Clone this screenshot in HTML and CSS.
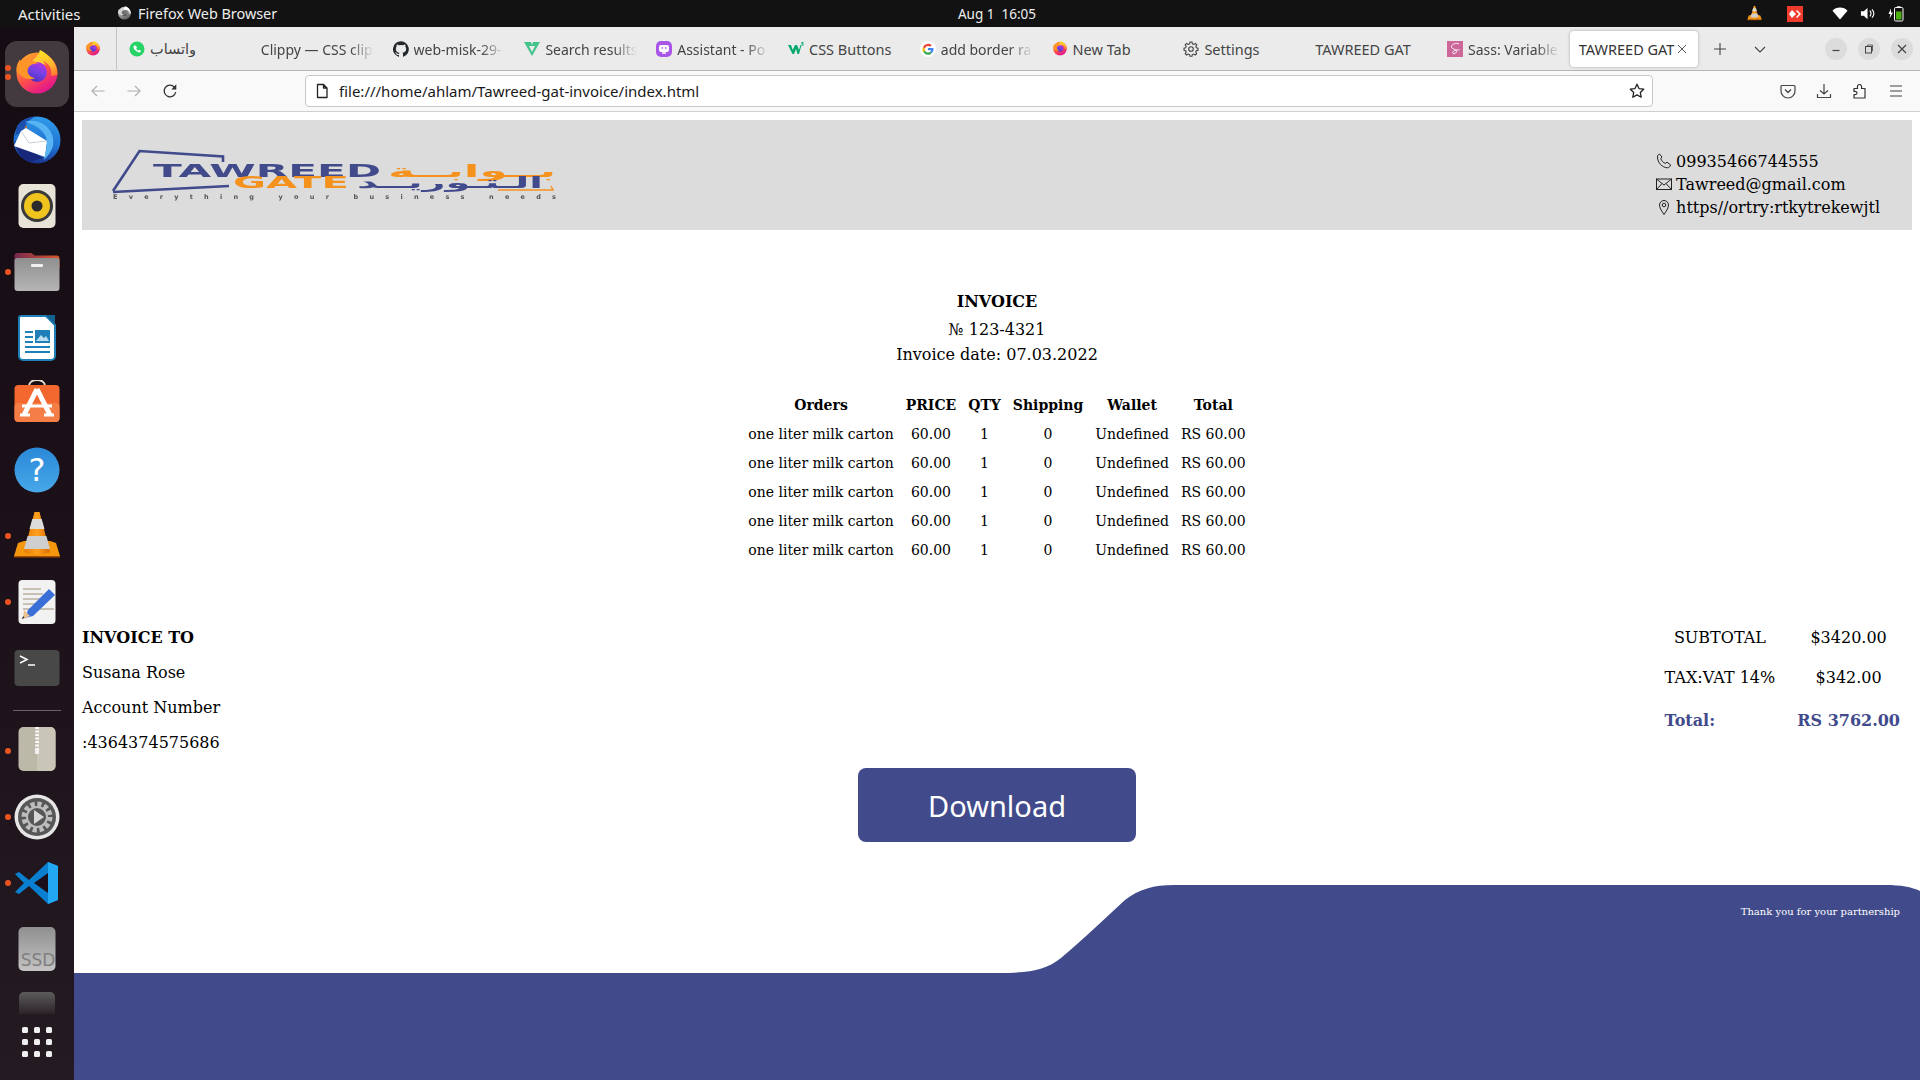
FILE: index.html
```html
<!DOCTYPE html>
<html lang="en">
<head>
<meta charset="utf-8">
<title>TAWREED GAT</title>
<link rel="stylesheet" href="styles.css">
</head>
<body>
<svg class="defs" width="0" height="0" aria-hidden="true">
  <defs>
    <linearGradient id="ffbody" x1="0.1" y1="0.2" x2="0.6" y2="1">
      <stop offset="0" stop-color="#ff9a2e"/><stop offset="0.5" stop-color="#ff4f4a"/><stop offset="1" stop-color="#e3178c"/>
    </linearGradient>
    <linearGradient id="ffflame" x1="0.4" y1="0" x2="0.6" y2="1">
      <stop offset="0" stop-color="#ffe226"/><stop offset="0.6" stop-color="#ffb52e"/><stop offset="1" stop-color="#ff7a2e"/>
    </linearGradient>
    <linearGradient id="ffglobe" x1="0.7" y1="0" x2="0.3" y2="1">
      <stop offset="0" stop-color="#b833e1"/><stop offset="0.5" stop-color="#7542e5"/><stop offset="1" stop-color="#4a2bc0"/>
    </linearGradient>
    <linearGradient id="tbbody" x1="0.6" y1="0" x2="0.4" y2="1">
      <stop offset="0" stop-color="#2f9be8"/><stop offset="0.6" stop-color="#1f6fd0"/><stop offset="1" stop-color="#1a2f8a"/>
    </linearGradient>
    <linearGradient id="filestop" x1="0" y1="0" x2="1" y2="0">
      <stop offset="0" stop-color="#77294f"/><stop offset="1" stop-color="#d9572b"/>
    </linearGradient>
    <linearGradient id="filesbody" x1="0" y1="0" x2="0" y2="1">
      <stop offset="0" stop-color="#8f8f8f"/><stop offset="1" stop-color="#b5b5b5"/>
    </linearGradient>
    <linearGradient id="helpbody" x1="0" y1="0" x2="0" y2="1">
      <stop offset="0" stop-color="#2a88d8"/><stop offset="1" stop-color="#48a8e8"/>
    </linearGradient>
    <linearGradient id="ssdbody" x1="0" y1="0" x2="0" y2="1">
      <stop offset="0" stop-color="#8f8f8f"/><stop offset="1" stop-color="#c4c4c4"/>
    </linearGradient>
    <linearGradient id="vlccone" x1="0" y1="0" x2="1" y2="0">
      <stop offset="0" stop-color="#e87a08"/><stop offset="0.5" stop-color="#ffa01e"/><stop offset="1" stop-color="#d96c05"/>
    </linearGradient>
    <symbol id="i-firefox" viewBox="0 0 48 48">
      <circle cx="24" cy="23" r="20.500" fill="url(#ffbody)"/>
      <path d="M27 0c-1.500 6 1 10 5 12 5 3 7 8 6 14l6.500-1C45 14 37 5 27 0z" fill="url(#ffflame)"/>
      <path d="M27 0c-2 6-5 8-8 11l14 4c-3-4-7-8-6-15z" fill="#ffcf32"/>
      <circle cx="24" cy="22" r="10" fill="url(#ffglobe)"/>
      <path d="M3.500 22C3 16 5 12 7 9.500c.5 1.500 1.500 2.500 3 3 3-2.500 6-4 9-4.500-1 1-1.500 2.500-1.500 4 3-1 6 0 8 1.500-4-.5-10 1.500-11 6-.5 4 2.500 8 8 8.500-5 2.500-11 1-14-2-2.500-2-4-4-5-4.500z" fill="#ff9528"/>
    </symbol>
    <symbol id="i-thunderbird" viewBox="0 0 48 48">
      <circle cx="24" cy="24" r="23.500" fill="url(#tbbody)"/>
      <path d="M4 10C8 4 14 1 22 .5 15 4 12 9 11 14l-9 6z" fill="#1b4fae"/>
      <path d="M2 25c1 11 7 18 14 21l14-4z" fill="#18277a"/>
      <path d="M8 15l5-3 21 13-2 16L1 30z" fill="#fff"/>
      <path d="M8 15l8 12 18-2" fill="none" stroke="#b8c3cc" stroke-width="0.800"/>
      <path d="M12 6c8-3 18 0 23 6s6 12 5 18c-2 6-5 10-9 14 1-5 3-13 3-18C34 16 22 8 12 6z" fill="#57b3f2"/>
      <circle cx="13" cy="11" r="1.100" fill="#d86a20"/>
    </symbol>
    <symbol id="i-rhythmbox" viewBox="0 0 48 48">
      <rect x="5.500" y="2" width="37" height="44" rx="5" fill="#e7e3d7"/>
      <circle cx="24" cy="24" r="16" fill="#3a3a3a"/>
      <circle cx="24" cy="24" r="13" fill="#f0c41f"/>
      <circle cx="24" cy="24" r="5.500" fill="#2b2b2b"/>
    </symbol>
    <symbol id="i-files" viewBox="0 0 48 48">
      <path d="M1.500 8a3 3 0 0 1 3-3h14l3 2.500h22a3 3 0 0 1 3 3V20H1.500z" fill="url(#filestop)"/>
      <rect x="1.500" y="10" width="45" height="33" rx="3" fill="url(#filesbody)"/>
      <rect x="18" y="16" width="12" height="3" rx="1" fill="#f0f0f0"/>
    </symbol>
    <symbol id="i-writer" viewBox="0 0 48 48">
      <path d="M8 2h25l9 9v31a4 4 0 0 1-4 4H10a4 4 0 0 1-4-4V4a2 2 0 0 1 2-2z" fill="#fff" stroke="#1f7fb8" stroke-width="2"/>
      <path d="M33 1h9v10z" fill="#14628f"/>
      <path d="M12 17h8v2h-8zM12 22h8v2h-8zM12 27h8v2h-8zM12 32h25v2H12zM12 37h25v2H12z" fill="#1f7fb8"/>
      <rect x="22" y="16" width="15" height="13" fill="#1f7fb8"/>
      <path d="M23 27l5-6 3 3 2-2 3 5z" fill="#bcdcf0"/>
    </symbol>
    <symbol id="i-software" viewBox="0 0 48 48">
      <path d="M16 6c0-8 16-8 16 0" fill="none" stroke="#e5dccb" stroke-width="2"/>
      <rect x="1.500" y="5" width="45" height="37" rx="4" fill="#f2682f"/>
      <rect x="1.500" y="23" width="45" height="19" rx="4" fill="#f57e47"/>
      <path d="M24 9l-13 26M24 9l13 26" stroke="#fff" stroke-width="5" fill="none"/>
      <path d="M9 26h30" stroke="#fff" stroke-width="3"/>
      <path d="M7 35h10M31 35h10" stroke="#fff" stroke-width="3"/>
    </symbol>
    <symbol id="i-vlc" viewBox="0 0 48 48">
      <path d="M11 29L5 31 1 44h46l-4-13-6-2z" fill="#f5960f"/>
      <path d="M1 44h46v1.500H1z" fill="#a04a05"/>
      <path d="M21 2a3 3 0 0 1 6 0l10 38c-4 3-22 3-26 0z" fill="url(#vlccone)"/>
      <path d="M19.300 7h9.400l2.800 10h-15z" fill="#dcdcdc"/>
      <path d="M14.600 24h18.800L37 37H11z" fill="#cfcfcf"/>
    </symbol>
    <symbol id="i-editor" viewBox="0 0 48 48">
      <rect x="5.500" y="2" width="37" height="44" rx="4" fill="#f2f2f2"/>
      <path d="M10 11h18M10 16h20M10 21h18M10 26h16M10 31h10M27 31h14" stroke="#c6c1b4" stroke-width="2"/>
      <path d="M36 11l6 6-22 21-8 2 3-8z" fill="#3a6fd8"/>
      <path d="M11 32l6 6-7 3z" fill="#e9c08e"/>
      <path d="M10.500 38l-2 3 3-1z" fill="#333"/>
    </symbol>
    <symbol id="i-archive" viewBox="0 0 48 48">
      <rect x="5.500" y="0" width="37" height="44" rx="5" fill="#bdb9a9"/>
      <path d="M24 0h13a5.500 5.500 0 0 1 5.500 5v34a5 5 0 0 1-5 5H24z" fill="#c9c6b8"/>
      <path d="M24 0v22" stroke="#fff" stroke-width="3.500" stroke-dasharray="2 1.500"/>
      <rect x="22" y="21" width="4" height="6" rx="1" fill="#f2f2f2"/>
    </symbol>
    <symbol id="i-settings" viewBox="0 0 48 48">
      <circle cx="24" cy="24" r="22.500" fill="#e6e6e6"/>
      <circle cx="24" cy="24" r="19" fill="#575757"/>
      <circle cx="24" cy="24" r="12.500" fill="none" stroke="#bdbdbd" stroke-width="6" stroke-dasharray="4 2.540"/>
      <circle cx="24" cy="24" r="10" fill="none" stroke="#bdbdbd" stroke-width="2"/>
      <path d="M21 17l10 7-10 7z" fill="#d8d8d8"/>
    </symbol>
    <symbol id="i-vscode" viewBox="0 0 48 48">
      <path d="M35 3L16 21 6 13 2 15l9 9-9 9 4 2 10-8 19 18 10-4V7z" fill="#0a7fd0"/>
      <path d="M35 3l10 4v34l-10 4z" fill="#22a7f2"/>
      <path d="M35 14L21 24l14 10z" fill="#1b0f1a"/>
    </symbol>
    <symbol id="i-ssd" viewBox="0 0 48 48">
      <rect x="5.500" y="2" width="37" height="44" rx="5" fill="url(#ssdbody)"/>
    </symbol>
    <symbol id="i-terminal" viewBox="0 0 48 48">
      <rect x="1.500" y="6" width="45" height="36" rx="4" fill="#484848"/>
      <path d="M7 12l7 3.500-7 3.500" fill="none" stroke="#fff" stroke-width="1.500"/>
      <path d="M15 21h7" stroke="#fff" stroke-width="1.500"/>
    </symbol>
    <symbol id="i-help" viewBox="0 0 48 48">
      <circle cx="24" cy="24" r="22.500" fill="url(#helpbody)"/>
    </symbol>
  </defs>
</svg>

<header class="topbar">
  <span class="top-activities">Activities</span>
  <span class="top-app">
    <svg class="ic-15 muted-icon"><use href="#i-firefox"/></svg>
    Firefox Web Browser
  </span>
  <span class="top-clock">Aug 1&nbsp;&nbsp;16:05</span>
  <span class="top-status">
    <svg class="ic-16 st-vlc"><use href="#i-vlc"/></svg>
    <svg class="st-red" viewBox="0 0 16 16"><rect width="16" height="16" fill="#ee3b2d"/><path d="M5 4l4 4-4 4-3-4zM10 4l4 4-4 4-1-1 3-3-3-3z" fill="#fff"/></svg>
    <svg class="st-wifi" viewBox="0 0 16 16"><path d="M0 5c4-4.500 12-4.500 16 0L8 14.500z" fill="#fff"/></svg>
    <svg class="st-vol" viewBox="0 0 16 16"><path d="M1 5.500h3L8 2v12L4 10.500H1z" fill="#fff"/><path d="M10.500 5c1.500 1.800 1.500 4.200 0 6M12.800 3.500c2.400 2.700 2.400 6.300 0 9" fill="none" stroke="#fff" stroke-width="1.200"/></svg>
    <svg class="st-bat" viewBox="0 0 16 16"><path d="M3 3L0.500 8.500h2L1.500 13 5 7H3z" fill="#fff"/><rect x="6.500" y="2" width="8.500" height="13.500" rx="1.200" fill="none" stroke="#fff"/><rect x="9" y="0.800" width="3.500" height="1.400" fill="#fff"/><rect x="8" y="6" width="5.500" height="8" fill="#4caf10"/></svg>
  </span>
</header>

<div class="desktop">
  <nav class="dock">
    <div class="dock-item dock-item-active">
      <span class="dot dot-a"></span><span class="dot dot-b"></span>
      <svg class="dock-ic"><use href="#i-firefox"/></svg>
    </div>
    <div class="dock-item"><svg class="dock-ic"><use href="#i-thunderbird"/></svg></div>
    <div class="dock-item"><svg class="dock-ic"><use href="#i-rhythmbox"/></svg></div>
    <div class="dock-item"><span class="dot"></span><svg class="dock-ic"><use href="#i-files"/></svg></div>
    <div class="dock-item"><svg class="dock-ic"><use href="#i-writer"/></svg></div>
    <div class="dock-item"><svg class="dock-ic"><use href="#i-software"/></svg></div>
    <div class="dock-item">
      <svg class="dock-ic" viewBox="0 0 48 48"><use href="#i-help"/><text x="24" y="35" class="help-mark">?</text></svg>
    </div>
    <div class="dock-item"><span class="dot"></span><svg class="dock-ic"><use href="#i-vlc"/></svg></div>
    <div class="dock-item"><span class="dot"></span><svg class="dock-ic"><use href="#i-editor"/></svg></div>
    <div class="dock-item"><svg class="dock-ic"><use href="#i-terminal"/></svg></div>
    <div class="dock-sep"></div>
    <div class="dock-item"><span class="dot"></span><svg class="dock-ic"><use href="#i-archive"/></svg></div>
    <div class="dock-item"><span class="dot"></span><svg class="dock-ic"><use href="#i-settings"/></svg></div>
    <div class="dock-item"><span class="dot"></span><svg class="dock-ic"><use href="#i-vscode"/></svg></div>
    <div class="dock-item">
      <svg class="dock-ic" viewBox="0 0 48 48"><use href="#i-ssd"/><text x="25" y="41" class="ssd-mark">SSD</text></svg>
    </div>
    <div class="dock-tile"></div>
    <div class="dock-grid">
      <i></i><i></i><i></i><i></i><i></i><i></i><i></i><i></i><i></i>
    </div>
  </nav>

  <div class="browser">
    <div class="tabbar">
      <div class="tab-home"><svg class="ic-16"><use href="#i-firefox"/></svg></div>
      <div class="tab">
        <svg class="tab-ic" viewBox="0 0 16 16"><circle cx="8" cy="8" r="7.500" fill="#25d366"/><path d="M5 4.500c-1 1-.6 3 1.200 4.800S10.500 12 11.500 11l.5-1.200-2-1-.8.800c-1-.4-1.500-1-2-2l.8-.8-1-2z" fill="#fff"/></svg>
        <span class="tab-label tab-arabic">واتساب</span>
      </div>
      <div class="tab"><span class="tab-label tab-fade">Clippy — CSS clip</span></div>
      <div class="tab">
        <svg class="tab-ic" viewBox="0 0 16 16"><path d="M8 .2a8 8 0 0 0-2.500 15.600c.4.100.5-.2.500-.4v-1.400c-2.200.5-2.700-1-2.700-1-.4-.9-.9-1.200-.9-1.200-.7-.5.100-.5.100-.5.800.1 1.200.8 1.200.8.700 1.200 1.900.9 2.300.7.100-.5.300-.9.500-1.100-1.800-.2-3.600-.9-3.600-4 0-.9.300-1.600.8-2.100-.1-.2-.4-1 .1-2.100 0 0 .7-.2 2.200.8a7.600 7.600 0 0 1 4 0c1.500-1 2.200-.8 2.200-.8.400 1.100.2 1.900.1 2.100.5.600.8 1.300.8 2.100 0 3.100-1.900 3.700-3.700 3.900.3.300.6.800.6 1.500v2.200c0 .2.100.5.600.4A8 8 0 0 0 8 .2z" fill="#24292e"/></svg>
        <span class="tab-label tab-fade">web-misk-29-</span>
      </div>
      <div class="tab">
        <svg class="tab-ic" viewBox="0 0 16 16"><path d="M0 1h7l1 3 1-3h7L8 15z" fill="#42c48a"/><path d="M5 5h6l-3 6z" fill="#ebebeb"/></svg>
        <span class="tab-label tab-fade">Search results</span>
      </div>
      <div class="tab">
        <svg class="tab-ic" viewBox="0 0 16 16"><rect width="16" height="16" rx="5" fill="#a855e8"/><rect x="3" y="4" width="10" height="7" rx="2" fill="#fff"/><path d="M5.500 7h1.500M9 7h1.500" stroke="#a855e8" stroke-width="1.500"/><path d="M6 12h4" stroke="#fff" stroke-width="1.500"/></svg>
        <span class="tab-label tab-fade">Assistant - Po</span>
      </div>
      <div class="tab">
        <svg class="tab-ic" viewBox="0 0 16 16"><path d="M0 4h3l1.800 5L7 4h2l2 5 1.500-5h1L11 13H9.500L8 8l-2 5H4.500z" fill="#04aa6d"/><path d="M13.500 1h2v1l-1 1h1v1.500h-2v-.7h1v-.6h-1z" fill="#04aa6d"/></svg>
        <span class="tab-label">CSS Buttons</span>
      </div>
      <div class="tab">
        <svg class="tab-ic" viewBox="0 0 16 16"><circle cx="8" cy="8" r="8" fill="#fff"/><path d="M13.500 8.200c0-.4 0-.8-.1-1.200H8v2.200h3.100a2.700 2.700 0 0 1-1.200 1.700l1.800 1.400c1.100-1 1.800-2.400 1.800-4.100z" fill="#4285f4"/><path d="M8 13.800c1.500 0 2.800-.5 3.700-1.400l-1.800-1.400c-.5.300-1.200.5-1.900.5-1.500 0-2.700-1-3.100-2.300L3 10.100a5.700 5.700 0 0 0 5 3.700z" fill="#34a853"/><path d="M4.900 9.700a3.400 3.400 0 0 1 0-2.300L3 6a5.700 5.700 0 0 0 0 5z" fill="#fbbc05"/><path d="M8 4.900c.8 0 1.600.3 2.100.8l1.600-1.600A5.700 5.700 0 0 0 3 6l1.900 1.400C5.300 6 6.500 4.900 8 4.900z" fill="#ea4335"/></svg>
        <span class="tab-label tab-fade">add border ra</span>
      </div>
      <div class="tab">
        <svg class="tab-ic"><use href="#i-firefox"/></svg>
        <span class="tab-label">New Tab</span>
      </div>
      <div class="tab">
        <svg class="tab-ic" viewBox="0 0 16 16"><circle cx="8" cy="8" r="2.300" fill="none" stroke="#444" stroke-width="1.100"/><path d="M7 1h2l.4 1.800 1.400.6 1.600-1 1.400 1.400-1 1.600.6 1.400L15 7.200v2l-1.700.4-.6 1.400 1 1.600-1.400 1.400-1.600-1-1.400.6L9 15.300H7l-.4-1.700-1.400-.6-1.600 1-1.400-1.400 1-1.600-.6-1.400L1 9.200v-2l1.600-.4.600-1.400-1-1.600 1.400-1.400 1.600 1 1.400-.6z" fill="none" stroke="#444" stroke-width="1.100"/></svg>
        <span class="tab-label">Settings</span>
      </div>
      <div class="tab"><span class="tab-label">TAWREED GAT</span></div>
      <div class="tab">
        <svg class="tab-ic" viewBox="0 0 16 16"><rect width="16" height="16" fill="#cd6799"/><path d="M12 3C9 1.500 5 3 4.500 5.500 4 8 9 8 9.500 10c.3 1.500-2 3.500-3.500 2.500-1-.7.500-3 3-3.500 2-.4 3.500 0 3.500 0" fill="none" stroke="#fff" stroke-width="0.900"/></svg>
        <span class="tab-label tab-fade">Sass: Variable</span>
      </div>
      <div class="tab tab-active">
        <span class="tab-label">TAWREED GAT</span>
        <svg class="tab-close" viewBox="0 0 12 12"><path d="M2 2l8 8M10 2l-8 8" stroke="#555" stroke-width="1"/></svg>
      </div>
      <div class="tab-tool"><svg class="ic-16" viewBox="0 0 16 16"><path d="M8 2v12M2 8h12" stroke="#444" stroke-width="1.100"/></svg></div>
      <div class="tab-tool"><svg class="ic-16" viewBox="0 0 16 16"><path d="M3 6l5 5 5-5" fill="none" stroke="#444" stroke-width="1.100"/></svg></div>
      <div class="win-controls">
        <span class="win-btn"><svg viewBox="0 0 22 22"><path d="M7.500 12.500h7" stroke="#444" stroke-width="1.200"/></svg></span>
        <span class="win-btn"><svg viewBox="0 0 22 22"><rect x="7.500" y="8.500" width="6" height="6.500" fill="none" stroke="#444"/><path d="M9.500 8.500V7h5v6h-1" fill="none" stroke="#444" stroke-width="0.800"/></svg></span>
        <span class="win-btn"><svg viewBox="0 0 22 22"><path d="M7 7l8 8M15 7l-8 8" stroke="#444" stroke-width="1.200"/></svg></span>
      </div>
    </div>

    <div class="navbar">
      <span class="nav-btn"><svg class="ic-16" viewBox="0 0 16 16"><path d="M14.500 8H2M7 3L2 8l5 5" fill="none" stroke="#b0b0b0" stroke-width="1.200"/></svg></span>
      <span class="nav-btn"><svg class="ic-16" viewBox="0 0 16 16"><path d="M1.500 8H14M9 3l5 5-5 5" fill="none" stroke="#b0b0b0" stroke-width="1.200"/></svg></span>
      <span class="nav-btn"><svg class="ic-16" viewBox="0 0 16 16"><path d="M13.700 9a5.800 5.800 0 1 1-1.500-5l1.500 1.800" fill="none" stroke="#333" stroke-width="1.300"/><path d="M14.300 1.200v5.200H9.300" fill="#333"/></svg></span>
      <div class="urlbar">
        <svg class="ic-16" viewBox="0 0 16 16"><path d="M3.500 1.500h6l3.500 3.500v9.500h-9.500z M9.500 1.500V5H13" fill="none" stroke="#222" stroke-width="1.300" stroke-linejoin="round"/></svg>
        <span class="url-text">file:///home/ahlam/Tawreed-gat-invoice/index.html</span>
        <svg class="url-star" viewBox="0 0 16 16"><path d="M8 1.300l2 4.300 4.700.6-3.400 3.300.9 4.700L8 11.900l-4.200 2.300.9-4.700L1.300 6.200 6 5.600z" fill="none" stroke="#222" stroke-width="1.300" stroke-linejoin="round"/></svg>
      </div>
      <div class="nav-right">
        <span class="nav-btn"><svg class="ic-16" viewBox="0 0 16 16"><path d="M2 2.500h12a1 1 0 0 1 1 1V8a7 7 0 0 1-14 0V3.500a1 1 0 0 1 1-1z" fill="none" stroke="#444" stroke-width="1.200"/><path d="M5 6.500l3 3 3-3" fill="none" stroke="#444" stroke-width="1.300"/></svg></span>
        <span class="nav-btn"><svg class="ic-16" viewBox="0 0 16 16"><path d="M8 1v10M4 7.500L8 11l4-3.500M1.500 11v3.500h13V11" fill="none" stroke="#444" stroke-width="1.200"/></svg></span>
        <span class="nav-btn"><svg class="ic-16" viewBox="0 0 16 16"><path d="M2 5.500h3.500C5 3 6 1.500 7.500 1.500S10 3 9.500 5.500H13v9.500H2v-3.500c2 .5 3-.5 3-1.500S4 8 2 8.500z" fill="none" stroke="#333" stroke-width="1.200" stroke-linejoin="round"/></svg></span>
        <span class="nav-btn"><svg class="ic-16" viewBox="0 0 16 16"><path d="M2 3h12M2 8h12M2 13h12" stroke="#444" stroke-width="1.200"/></svg></span>
      </div>
    </div>

    <main class="page">
      <section class="inv-header">
        <svg class="logo" viewBox="0 0 450 56" role="img" aria-label="Tawreed Gate">
          <path d="M2 43L28.500 3 112 8.500V14" fill="none" stroke="#414a8b" stroke-width="2.600"/>
          <path d="M2 44L118 38" fill="none" stroke="#414a8b" stroke-width="2.600"/>
          <text class="logo-tawreed" x="42" y="29" textLength="228" lengthAdjust="spacingAndGlyphs">TAWREED</text>
          <text class="logo-gate" x="122" y="40" textLength="116" lengthAdjust="spacingAndGlyphs">GATE</text>
          <text class="logo-ar-top" x="277" y="29" textLength="168" lengthAdjust="spacingAndGlyphs">بــوابــة</text>
          <text class="logo-ar-low" x="246" y="40" textLength="186" lengthAdjust="spacingAndGlyphs">الـتـوريــد</text>
          <path d="M387 42h55l-2-4" fill="none" stroke="#f5921e" stroke-width="1.500"/>
          <text class="logo-tag" x="2" y="51" textLength="443">Everything your business needs</text>
        </svg>
        <div class="contacts">
          <div class="contact">
            <svg class="contact-ic" viewBox="0 0 16 16"><path d="M3.500 1l2.500 3-1.200 1.700c.6 2 2.500 4 4.500 4.700L11 9.200l3.500 2.600c-.3 1.700-1.500 3-3 3C6 14.500 1.500 9.500 1.500 4 1.500 2.500 2.200 1.500 3.500 1z" fill="none" stroke="#222" stroke-width="1"/></svg>
            <span>09935466744555</span>
          </div>
          <div class="contact">
            <svg class="contact-ic" viewBox="0 0 16 16"><rect x="0.500" y="3" width="15" height="10.500" fill="none" stroke="#222"/><path d="M.5 3L8 9l7.500-6M.5 13.500L6 7.500M15.500 13.500L10 7.500" fill="none" stroke="#222"/></svg>
            <span>Tawreed@gmail.com</span>
          </div>
          <div class="contact">
            <svg class="contact-ic" viewBox="0 0 16 16"><path d="M8 15.500C5 11 3.500 8.500 3.500 6a4.500 4.500 0 0 1 9 0c0 2.500-1.500 5-4.500 9.500z" fill="none" stroke="#222"/><circle cx="8" cy="6" r="1.800" fill="none" stroke="#222"/></svg>
            <span>https//ortry:rtkytrekewjtl</span>
          </div>
        </div>
      </section>

      <section class="inv-title">
        <h1>INVOICE</h1>
        <p>№ 123-4321</p>
        <p>Invoice date: 07.03.2022</p>
      </section>

      <table class="orders">
        <thead>
          <tr><th>Orders</th><th>PRICE</th><th>QTY</th><th>Shipping</th><th>Wallet</th><th>Total</th></tr>
        </thead>
        <tbody>
          <tr><td>one liter milk carton</td><td>60.00</td><td>1</td><td>0</td><td>Undefined</td><td>RS 60.00</td></tr>
          <tr><td>one liter milk carton</td><td>60.00</td><td>1</td><td>0</td><td>Undefined</td><td>RS 60.00</td></tr>
          <tr><td>one liter milk carton</td><td>60.00</td><td>1</td><td>0</td><td>Undefined</td><td>RS 60.00</td></tr>
          <tr><td>one liter milk carton</td><td>60.00</td><td>1</td><td>0</td><td>Undefined</td><td>RS 60.00</td></tr>
          <tr><td>one liter milk carton</td><td>60.00</td><td>1</td><td>0</td><td>Undefined</td><td>RS 60.00</td></tr>
        </tbody>
      </table>

      <section class="bill">
        <div class="bill-to">
          <strong>INVOICE TO</strong>
          <span>Susana Rose</span>
          <span>Account Number</span>
          <span>:4364374575686</span>
        </div>
        <table class="sums">
          <tr><td>SUBTOTAL</td><td>$3420.00</td></tr>
          <tr><td>TAX:VAT 14%</td><td>$342.00</td></tr>
          <tr class="sums-total"><td>Total:</td><td>RS 3762.00</td></tr>
        </table>
      </section>

      <div class="actions"><button class="download" type="button">Download</button></div>

      <footer class="wave">
        <svg class="wave-bg" viewBox="0 0 1846 195" preserveAspectRatio="none" aria-hidden="true">
          <path d="M0 88H925C955 88 972 85 987 73C1010 54 1030 34 1051 15C1065 4 1080 0 1100 0H1812C1826 0 1838 2 1846 6V195H0z" fill="#414a8b"/>
        </svg>
        <p class="thanks">Thank you for your partnership</p>
      </footer>
    </main>
  </div>
</div>
</body>
</html>
```

FILE: styles.css
```css
* { box-sizing: border-box; }
html, body { margin: 0; padding: 0; }
body {
  width: 1920px;
  height: 1080px;
  overflow: hidden;
  display: flex;
  flex-direction: column;
  background: #fff;
  font-family: "Noto Sans", sans-serif;
}
svg { display: block; }
.defs { position: absolute; }
.ic-15 { width: 15px; height: 15px; }
.ic-16 { width: 16px; height: 16px; }
.muted-icon { filter: grayscale(1) brightness(1.3); }

/* top bar */
.topbar {
  flex: 0 0 27px;
  display: flex;
  align-items: center;
  position: relative;
  background: #121212;
  color: #eeeeee;
  font-size: 14.400px;
  padding-left: 18px;
}
.top-activities { width: 99px; font-size: 15px; }
.top-app { display: flex; align-items: center; gap: 6px; }
.top-clock {
  position: absolute;
  left: 957px;
  width: 80px;
  text-align: center;
  white-space: nowrap;
  font-size: 13.500px;
}
.top-status {
  margin-left: auto;
  display: flex;
  align-items: center;
  padding-right: 16px;
}
.st-vlc { width: 15px; height: 17px; margin-right: 25px; }
.st-red { width: 16px; height: 16px; margin-right: 29px; }
.st-wifi { width: 16px; height: 15px; margin-right: 12px; }
.st-vol { width: 15px; height: 15px; margin-right: 13px; }
.st-bat { width: 16px; height: 17px; }

/* layout */
.desktop { flex: 1; display: flex; min-height: 0; }

/* dock */
.dock {
  flex: 0 0 74px;
  display: flex;
  flex-direction: column;
  align-items: center;
  padding-top: 14px;
  background: linear-gradient(180deg, #140b13 0%, #1c1119 50%, #241a22 100%);
  overflow: hidden;
}
.dock-item {
  position: relative;
  flex: 0 0 66px;
  width: 64px;
  display: flex;
  align-items: center;
  justify-content: center;
}
.dock-item-active { background: #433a40; border-radius: 12px; }
.dock-ic { width: 48px; height: 48px; }
.dot {
  position: absolute;
  left: 0;
  top: 30px;
  width: 6px;
  height: 6px;
  border-radius: 50%;
  background: #e95420;
}
.dot-a { top: 24px; }
.dot-b { top: 33px; }
.help-mark { font: 32px "DejaVu Sans", sans-serif; fill: #fff; text-anchor: middle; }
.ssd-mark { font: 17px "DejaVu Sans", sans-serif; fill: #808080; text-anchor: middle; }
.dock-sep { flex: 0 0 17px; width: 48px; display: flex; position: relative; }
.dock-sep::before { content: ""; width: 100%; height: 1px; margin-top: 9px; background: #6b6168; }
.dock-tile {
  flex: 0 0 22px;
  width: 36px;
  margin-top: 10px;
  border-radius: 5px 5px 0 0;
  background: linear-gradient(180deg, #5c5c5c, #2c2228);
}
.dock-grid {
  display: grid;
  grid-template-columns: repeat(3, 6px);
  grid-auto-rows: 6px;
  gap: 6px;
  margin-top: 13px;
}
.dock-grid i { background: #f0f0f0; border-radius: 1.500px; }

/* browser */
.browser { flex: 1; display: flex; flex-direction: column; min-width: 0; }
.tabbar {
  flex: 0 0 44px;
  display: flex;
  align-items: stretch;
  background: #ebebeb;
  border-bottom: 1px solid #b5b5b5;
  font-size: 14.500px;
  color: #444;
}
.tab-home {
  flex: 0 0 44px;
  display: flex;
  align-items: center;
  padding-left: 11px;
  position: relative;
}
.tab-home::after {
  content: "";
  position: absolute;
  right: 1px;
  top: 0;
  bottom: 0;
  width: 1px;
  background: #c4c4c4;
}
.tab {
  flex: 0 0 131.800px;
  display: flex;
  align-items: center;
  gap: 5px;
  padding: 1px 8px 0 11px;
  min-width: 0;
}
.tab-ic { flex: 0 0 16px; width: 16px; height: 16px; }
.tab-label { flex: 1; min-width: 0; white-space: nowrap; overflow: hidden; }
.tab-fade {
  font-size: 14px;
  -webkit-mask-image: linear-gradient(to left, transparent, #000 24px);
  mask-image: linear-gradient(to left, transparent, #000 24px);
}
.tab-arabic { font-family: "DejaVu Sans", sans-serif; font-size: 14.500px; }
.tab-active {
  flex-basis: 128px;
  margin: 4px 2px 3px 2px;
  padding: 0 10px 0 9px;
  gap: 0;
  background: #fff;
  border-radius: 4px;
  box-shadow: 0 0 3px rgba(0, 0, 0, 0.3);
  color: #333;
}
.tab-close { flex: 0 0 12px; width: 12px; height: 12px; }
.tab-tool { flex: 0 0 40px; display: flex; align-items: center; justify-content: center; }
.win-controls { margin-left: auto; display: flex; align-items: center; gap: 11px; padding-right: 7px; }
.win-btn { width: 22px; height: 22px; border-radius: 50%; background: #dcdcdc; }

.navbar {
  flex: 0 0 41px;
  display: flex;
  align-items: center;
  padding-left: 6px;
  background: #f9f9f9;
  border-bottom: 1px solid #cfcfcf;
}
.nav-btn { flex: 0 0 36px; height: 32px; display: flex; align-items: center; justify-content: center; }
.urlbar {
  flex: 0 0 1348px;
  height: 32px;
  margin-left: 117px;
  display: flex;
  align-items: center;
  gap: 9px;
  padding: 0 7px 0 8px;
  background: #fff;
  border: 1px solid #c8c8c8;
  border-radius: 4px;
  font-size: 15px;
  color: #1a1a1a;
}
.url-text { flex: 1; }
.url-star { width: 16px; height: 16px; }
.nav-right { display: flex; margin-left: 117px; }

/* invoice page */
.page {
  flex: 1;
  display: flex;
  flex-direction: column;
  min-height: 0;
  padding-top: 8px;
  background: #fff;
  color: #000;
  font-family: "DejaVu Serif", serif;
  font-size: 16px;
}
.inv-header {
  flex: 0 0 110px;
  display: flex;
  align-items: center;
  justify-content: space-between;
  margin: 0 8px;
  padding: 0 32px 0 29px;
  background: #dcdcdc;
}
.logo { width: 450px; height: 56px; margin-top: 1px; filter: blur(0.5px); }
.logo-tawreed { font: 700 17px "DejaVu Sans", sans-serif; fill: #414a8b; }
.logo-gate { font: 700 15px "DejaVu Sans", sans-serif; fill: #f5921e; }
.logo-ar-top { font: 700 17px "DejaVu Sans", sans-serif; fill: #f5921e; }
.logo-ar-low { font: 700 16px "DejaVu Sans", sans-serif; fill: #414a8b; }
.logo-tag { font: 700 6.500px "DejaVu Sans", sans-serif; fill: #555; }
.contacts { line-height: 23px; padding-top: 19px; }
.contact { display: flex; align-items: center; gap: 4px; }
.contact-ic { flex: 0 0 16px; width: 16px; height: 16px; margin-top: -2px; }

.inv-title { text-align: center; padding-top: 60px; line-height: 25px; }
.inv-title h1 { margin: 0 0 3px; font-size: 16px; line-height: 24px; font-weight: 700; }
.inv-title p { margin: 0; }

.orders {
  margin: 23px auto 0;
  border-collapse: collapse;
  font-size: 14px;
}
.orders th, .orders td {
  height: 29px;
  padding: 0 6px;
  text-align: center;
  white-space: nowrap;
}
.bill {
  display: flex;
  justify-content: space-between;
  align-items: flex-start;
  margin-top: 56px;
  padding: 0 20px 0 8px;
}
.bill-to { display: flex; flex-direction: column; line-height: 35px; }
.sums { border-collapse: collapse; margin-top: -3px; }
.sums td { padding: 0; height: 40px; text-align: center; white-space: nowrap; }
.sums td:first-child { padding-right: 22px; }
.sums-total td { height: 46px; color: #414a8b; font-weight: 700; }
.sums-total td:first-child { text-align: left; }
.actions { display: flex; justify-content: center; margin-top: 8px; }
.download {
  width: 278px;
  height: 74px;
  border: 0;
  border-radius: 8px;
  background: #414a8b;
  color: #fff;
  font-family: "Noto Sans", sans-serif;
  font-size: 29px;
}
.wave {
  position: relative;
  flex: 0 0 195px;
  height: 195px;
  margin-top: auto;
}
.wave-bg { position: absolute; inset: 0; width: 100%; height: 100%; }
.thanks {
  position: relative;
  margin: 0;
  padding: 20px 20px 0 0;
  text-align: right;
  color: #fff;
  font-size: 10px;
  line-height: 13px;
}
```
